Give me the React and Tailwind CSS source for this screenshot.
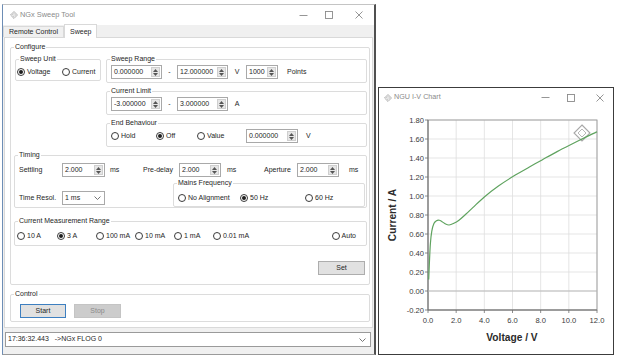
import React from 'react';

const Diamond = ({ size = 8, color = '#9a9a9a' }) => (
  <svg width={size} height={size} viewBox="0 0 12 12">
    <path d="M6 0.8 L11.2 6 L6 11.2 L0.8 6 Z" fill="none" stroke={color} strokeWidth="1.2" />
    <path d="M6 3.6 L8.4 6 L6 8.4 L3.6 6 Z" fill="none" stroke={color} strokeWidth="1" />
  </svg>
);

const CaptionButtons = ({ color, closeGap }) => (
  <div className="flex items-center h-full">
    <div className="w-[26px] flex justify-center">
      <svg width="9" height="9"><path d="M0.5 4.5 H8.5" stroke={color} strokeWidth="0.9" /></svg>
    </div>
    <div className="w-[26px] flex justify-center">
      <svg width="8" height="8"><rect x="0.5" y="0.5" width="7" height="7" fill="none" stroke={color} strokeWidth="0.9" /></svg>
    </div>
    <div className={`w-[26px] flex justify-center ${closeGap}`}>
      <svg width="8" height="8"><path d="M0.5 0.5 L7.5 7.5 M7.5 0.5 L0.5 7.5" stroke={color} strokeWidth="0.9" /></svg>
    </div>
  </div>
);

const Group = ({ title, className = '', children }) => (
  <fieldset className={`border border-[#dcdcdc] rounded-[2px] ${className}`}>
    <legend className="ml-[3px] px-[1px] leading-[10px]">{title}</legend>
    {children}
  </fieldset>
);

const Radio = ({ label, checked, className = '' }) => (
  <div className={`flex items-center gap-[2px] h-[10px] ${className}`}>
    <span className="w-[8px] h-[8px] rounded-full border border-[#3a3a3a] bg-white flex items-center justify-center shrink-0">
      {checked && <span className="w-[4px] h-[4px] rounded-full bg-[#1e1e1e]" />}
    </span>
    <span className="whitespace-nowrap">{label}</span>
  </div>
);

const Spin = ({ value, className = '' }) => (
  <div className={`flex h-[14px] border border-[#a9a9a9] bg-white shrink-0 ${className}`}>
    <span className="flex-1 pl-[2px] leading-[12px] whitespace-nowrap">{value}</span>
    <span className="w-[9px] my-[1px] mr-[1px] bg-[#e6e6e6] border border-[#cfcfcf] flex flex-col items-center justify-center gap-[1px]">
      <svg width="5" height="3"><path d="M0 3 L2.5 0 L5 3 Z" fill="#555" /></svg>
      <svg width="5" height="3"><path d="M0 0 L2.5 3 L5 0 Z" fill="#555" /></svg>
    </span>
  </div>
);

const Chevron = () => (
  <svg width="7" height="4"><path d="M0.5 0.5 L3.5 3.5 L6.5 0.5" fill="none" stroke="#666" strokeWidth="0.9" /></svg>
);

// I-V chart, drawn in page coordinates
const X0 = 428, X1 = 597;
const vx = (v) => X0 + (v / 12) * (X1 - X0);
const iy = (i) => 291 - i * 95;

const curve = [
  [0.05, 0.12], [0.1, 0.3], [0.17, 0.5], [0.27, 0.63], [0.42, 0.71], [0.6, 0.74],
  [0.8, 0.745], [1.0, 0.73], [1.25, 0.705], [1.5, 0.695], [1.8, 0.71], [2.2, 0.745],
  [2.7, 0.81], [3.2, 0.88], [4.0, 0.99], [5.0, 1.105], [6.2, 1.22], [7.2, 1.305],
  [8.1, 1.38], [9.2, 1.47], [10.4, 1.56], [11.2, 1.62], [12, 1.675],
].map(([v, i]) => [vx(v), iy(i)]);

const smoothPath = (pts) => {
  let d = `M${pts[0][0]} ${pts[0][1]}`;
  for (let k = 0; k < pts.length - 1; k++) {
    const p0 = pts[k - 1] || pts[k];
    const p1 = pts[k];
    const p2 = pts[k + 1];
    const p3 = pts[k + 2] || p2;
    const c1 = [p1[0] + (p2[0] - p0[0]) / 6, p1[1] + (p2[1] - p0[1]) / 6];
    const c2 = [p2[0] - (p3[0] - p1[0]) / 6, p2[1] - (p3[1] - p1[1]) / 6];
    d += ` C${c1[0]} ${c1[1]} ${c2[0]} ${c2[1]} ${p2[0]} ${p2[1]}`;
  }
  return d;
};

const yTicks = [-0.2, 0, 0.2, 0.4, 0.6, 0.8, 1.0, 1.2, 1.4, 1.6, 1.8];
const xTicks = [0, 2, 4, 6, 8, 10, 12];

const Chart = () => (
  <svg width="234" height="247" viewBox="379 107 234 247" className="block">
    {yTicks.map((t) => (
      <line key={`gy${t}`} x1={X0} x2={X1} y1={iy(t)} y2={iy(t)} stroke="#dedede" strokeWidth="0.8" />
    ))}
    {xTicks.map((t) => (
      <line key={`gx${t}`} x1={vx(t)} x2={vx(t)} y1={120} y2={310} stroke="#dedede" strokeWidth="0.8" />
    ))}
    <rect x={X0} y={120} width={X1 - X0} height={190} fill="none" stroke="#9a9a9a" strokeWidth="0.9" />
    <line x1={X0} x2={X0} y1={120} y2={310} stroke="#6e6e6e" strokeWidth="1" />
    <line x1={X0} x2={X1} y1={310} y2={310} stroke="#6e6e6e" strokeWidth="1" />
    <line x1={X0} x2={X1} y1={291} y2={291} stroke="#b5b5b5" strokeWidth="0.9" />
    {yTicks.map((t) => (
      <g key={`ty${t}`}>
        <line x1={X0 - 3} x2={X0} y1={iy(t)} y2={iy(t)} stroke="#6e6e6e" strokeWidth="0.8" />
        <text x={424} y={iy(t) + 2.6} textAnchor="end" fontSize="7.6" fill="#3a3a3a" fontFamily="'Liberation Sans', Arial, sans-serif">
          {t.toFixed(2)}
        </text>
      </g>
    ))}
    {xTicks.map((t) => (
      <g key={`tx${t}`}>
        <line x1={vx(t)} x2={vx(t)} y1={310} y2={313} stroke="#6e6e6e" strokeWidth="0.8" />
        <text x={vx(t)} y={323} textAnchor="middle" fontSize="7.6" fill="#3a3a3a" fontFamily="'Liberation Sans', Arial, sans-serif">
          {t.toFixed(1)}
        </text>
      </g>
    ))}
    <g transform="translate(582 133)">
      <path d="M0 -8 L8 0 L0 8 L-8 0 Z" fill="#ffffff" fillOpacity="0.6" stroke="#a8a8a8" strokeWidth="1.1" />
      <path d="M0 -4 L4 0 L0 4 L-4 0 Z" fill="none" stroke="#b0b0b0" strokeWidth="0.9" />
    </g>
    <path d={smoothPath(curve)} fill="none" stroke="#5fa35f" strokeWidth="1.2" />
    <text x={512} y={341} textAnchor="middle" fontSize="10.2" fontWeight="bold" fill="#2a2a2a" fontFamily="'Liberation Sans', Arial, sans-serif">
      Voltage / V
    </text>
    <text x={0} y={0} transform="translate(396 215) rotate(-90)" textAnchor="middle" fontSize="10.2" fontWeight="bold" fill="#2a2a2a" fontFamily="'Liberation Sans', Arial, sans-serif">
      Current / A
    </text>
  </svg>
);

export default function App() {
  return (
    <div className="relative w-[619px] h-[358px] bg-white overflow-hidden text-[7px] text-[#262626] font-['Liberation_Sans',Arial,sans-serif]">
      {/* NGx Sweep Tool window */}
      <div className="absolute left-[2px] top-[4px] w-[374px] h-[351px] flex flex-col bg-[#f0f0f0] border-l border-l-[#6d8db5] border-r-2 border-r-[#505050] border-t border-t-[#c4c4c4] border-b border-b-[#9a9a9a]">
        <div className="h-[20px] bg-white flex items-center pl-[7px]">
          <Diamond size={8} />
          <span className="ml-[2px] text-[7.4px] text-[#8a8a8a]">NGx Sweep Tool</span>
          <div className="ml-auto h-full pr-[2px]">
            <CaptionButtons color="#8a8a8a" closeGap="ml-[4px]" />
          </div>
        </div>

        <div className="h-[12px] flex items-end">
          <div className="h-[11px] px-[5px] border border-b-0 border-[#d9d9d9] flex items-center">Remote Control</div>
          <div className="relative z-10 h-[14px] -mb-[1px] px-[5px] bg-white border border-b-0 border-[#d9d9d9] flex items-start pt-[2px]">Sweep</div>
        </div>

        <div className="ml-[1px] w-[369px] h-[291px] bg-white border border-[#d9d9d9] flex flex-col pt-[4px] pl-[5px]">
          {/* Configure */}
          <Group title="Configure" className="w-[360px] pb-[9px]">
            <div className="flex pl-[4px] pt-[2px] gap-[5px]">
              <Group title="Sweep Unit" className="w-[86px] h-[27px]">
                <div className="flex pl-[1px] pt-[3px]">
                  <Radio label="Voltage" checked className="w-[45px]" />
                  <Radio label="Current" />
                </div>
              </Group>
              <div className="w-[261px] flex flex-col gap-[3px]">
                <Group title="Sweep Range" className="pb-[3px]">
                  <div className="flex items-center pl-[4px] pt-[1px]">
                    <Spin value="0.000000" className="w-[51px]" />
                    <span className="w-[15px] text-center">-</span>
                    <Spin value="12.000000" className="w-[51px]" />
                    <span className="w-[18px] text-center">V</span>
                    <Spin value="1000" className="w-[32px]" />
                    <span className="ml-[9px]">Points</span>
                  </div>
                </Group>
                <Group title="Current Limit" className="pb-[3px]">
                  <div className="flex items-center pl-[4px] pt-[1px]">
                    <Spin value="-3.000000" className="w-[51px]" />
                    <span className="w-[15px] text-center">-</span>
                    <Spin value="3.000000" className="w-[51px]" />
                    <span className="w-[18px] text-center">A</span>
                  </div>
                </Group>
                <Group title="End Behaviour" className="pb-[3px]">
                  <div className="flex items-center pl-[4px] pt-[1px]">
                    <Radio label="Hold" className="w-[45px]" />
                    <Radio label="Off" checked className="w-[41px]" />
                    <Radio label="Value" className="w-[49px]" />
                    <Spin value="0.000000" className="w-[52px]" />
                    <span className="ml-[8px]">V</span>
                  </div>
                </Group>
              </div>
            </div>

            <Group title="Timing" className="ml-[3px] mt-[3px] w-[353px]">
              <div className="flex items-center pl-[4px] pt-[3px]">
                <span className="w-[43px]">Settling</span>
                <Spin value="2.000" className="w-[43px]" />
                <span className="ml-[5px] w-[33px]">ms</span>
                <span className="w-[36px]">Pre-delay</span>
                <Spin value="2.000" className="w-[42px]" />
                <span className="ml-[6px] w-[37px]">ms</span>
                <span className="w-[33px]">Aperture</span>
                <Spin value="2.000" className="w-[42px]" />
                <span className="ml-[10px]">ms</span>
              </div>
              <div className="flex items-end pl-[4px] mt-[1px]">
                <span className="w-[43px] h-[14px] mb-[2px] flex items-center">Time Resol.</span>
                <div className="w-[43px] h-[14px] mb-[2px] border border-[#a9a9a9] bg-white flex items-center justify-between pl-[2px] pr-[3px]">
                  <span>1 ms</span>
                  <Chevron />
                </div>
                <Group title="Mains Frequency" className="ml-[68px] w-[192px] pb-[3px]">
                  <div className="flex pl-[4px] pt-[5px]">
                    <Radio label="No Alignment" className="w-[62px]" />
                    <Radio label="50 Hz" checked className="w-[65px]" />
                    <Radio label="60 Hz" />
                  </div>
                </Group>
              </div>
            </Group>

            <Group title="Current Measurement Range" className="ml-[3px] mt-[8px] w-[353px] pb-[4px]">
              <div className="flex pl-[2px] pr-[10px] pt-[5px]">
                <Radio label="10 A" className="w-[40px]" />
                <Radio label="3 A" checked className="w-[39px]" />
                <Radio label="100 mA" className="w-[39px]" />
                <Radio label="10 mA" className="w-[39px]" />
                <Radio label="1 mA" className="w-[39px]" />
                <Radio label="0.01 mA" />
                <Radio label="Auto" className="ml-auto" />
              </div>
            </Group>

            <div className="flex justify-end pr-[4px] mt-[15px]">
              <button className="w-[47px] h-[14px] bg-[#e1e1e1] border border-[#adadad] leading-[12px]">Set</button>
            </div>
          </Group>

          {/* Control */}
          <Group title="Control" className="w-[360px] mt-[4px] pb-[3px]">
            <div className="flex pl-[9px] pt-[5px] gap-[8px]">
              <button className="w-[46px] h-[14px] bg-[#e1e1e1] border border-[#3d7fc0] leading-[12px]">Start</button>
              <button className="w-[47px] h-[14px] bg-[#cccccc] border border-[#c4c4c4] text-[#8a8a8a] leading-[12px]">Stop</button>
            </div>
          </Group>
        </div>

        <div className="ml-[2px] mt-[4px] w-[366px] h-[15px] bg-white border border-[#9a9a9a] flex items-center justify-between pl-[2px] pr-[4px]">
          <span className="whitespace-pre">17:36:32.443   -&gt;NGx FLOG 0</span>
          <Chevron />
        </div>
      </div>

      {/* NGU I-V Chart window */}
      <div className="absolute left-[378px] top-[87px] w-[236px] h-[268px] bg-white border border-[#3c3c3c] flex flex-col">
        <div className="h-[19px] flex items-center pl-[5px]">
          <Diamond size={8} />
          <span className="ml-[2px] text-[7.2px] text-[#8a8a8a]">NGU I-V Chart</span>
          <div className="ml-auto h-full">
            <CaptionButtons color="#8a8a8a" closeGap="ml-[3px]" />
          </div>
        </div>
        <Chart />
      </div>
    </div>
  );
}
